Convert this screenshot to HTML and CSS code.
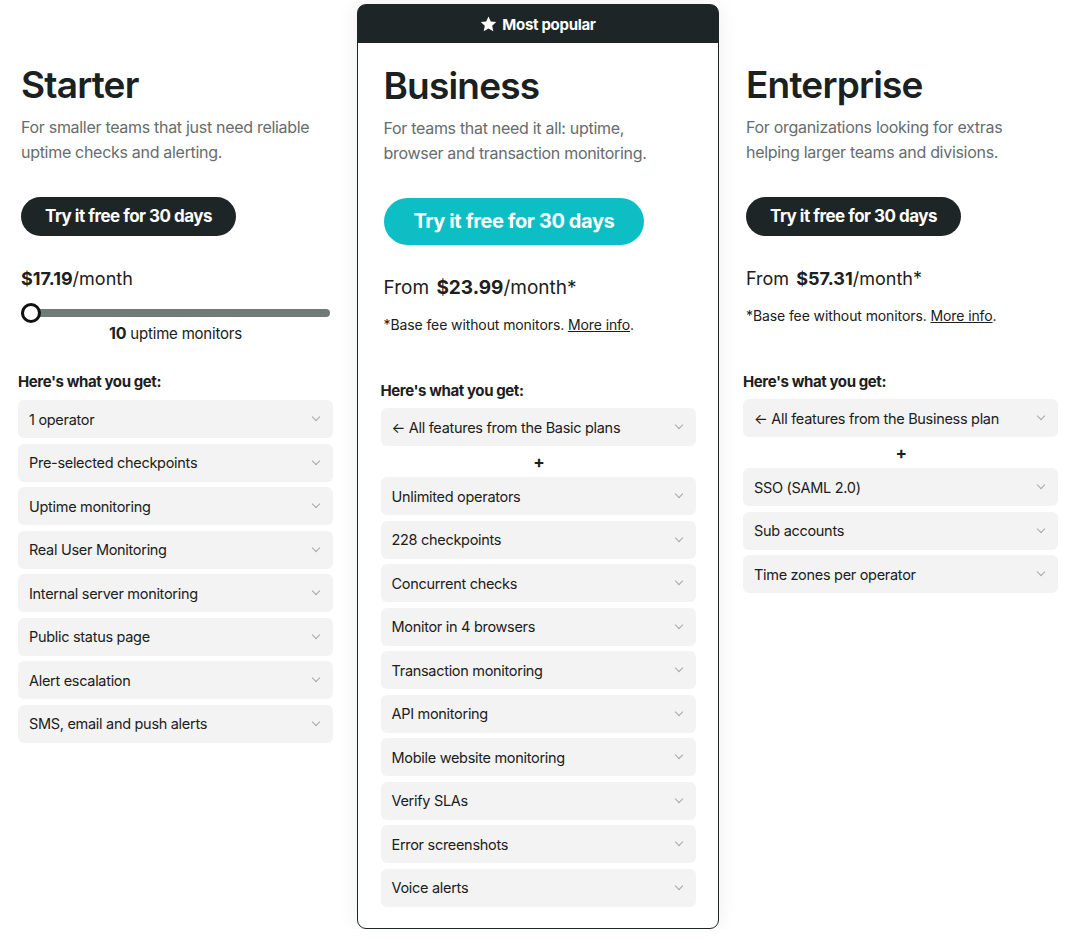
FILE: index.html
```html
<!DOCTYPE html>
<html lang="en">
  <head>
    <meta charset="UTF-8" />
    <meta name="viewport" content="width=device-width, initial-scale=1.0" />
    <title>Pricing plans</title>
    <link rel="stylesheet" href="styles.css">
  </head>
  <body>
    <div class="plans">
      <!-- Starter -->
      <div class="plan">
        <h2 class="plan-name">Starter</h2>
        <p class="plan-desc">For smaller teams that just need reliable uptime checks and alerting.</p>
        <a class="btn" href="#">Try it free for 30 days</a>
        <div class="price"><b>$17.19</b>/month</div>
        <div class="slider">
          <div class="track"></div>
          <div class="thumb"></div>
        </div>
        <div class="slider-label"><b>10</b> uptime monitors</div>
        <h4 class="get">Here's what you get:</h4>
        <ul class="features">
          <li>1 operator</li>
          <li>Pre-selected checkpoints</li>
          <li>Uptime monitoring</li>
          <li>Real User Monitoring</li>
          <li>Internal server monitoring</li>
          <li>Public status page</li>
          <li>Alert escalation</li>
          <li>SMS, email and push alerts</li>
        </ul>
      </div>

      <!-- Business -->
      <div class="plan popular">
        <div class="badge">
          <svg width="17" height="16" viewBox="0 0 24 23"><path d="M12 0.8l3.3 7.1 7.8 0.9-5.8 5.3 1.6 7.7L12 17.9l-6.9 3.9 1.6-7.7L0.9 8.8l7.8-0.9z" fill="#fff"/></svg>
          Most popular
        </div>
        <h2 class="plan-name">Business</h2>
        <p class="plan-desc">For teams that need it all: uptime, browser and transaction monitoring.</p>
        <a class="btn btn-teal" href="#">Try it free for 30 days</a>
        <div class="price">From <b>$23.99</b>/month*</div>
        <p class="note">*Base fee without monitors. <a href="#">More info</a>.</p>
        <h4 class="get">Here's what you get:</h4>
        <ul class="features">
          <li>&larr; All features from the Basic plans</li>
          <li class="plus">+</li>
          <li>Unlimited operators</li>
          <li>228 checkpoints</li>
          <li>Concurrent checks</li>
          <li>Monitor in 4 browsers</li>
          <li>Transaction monitoring</li>
          <li>API monitoring</li>
          <li>Mobile website monitoring</li>
          <li>Verify SLAs</li>
          <li>Error screenshots</li>
          <li>Voice alerts</li>
        </ul>
      </div>

      <!-- Enterprise -->
      <div class="plan">
        <h2 class="plan-name">Enterprise</h2>
        <p class="plan-desc">For organizations looking for extras helping larger teams and divisions.</p>
        <a class="btn" href="#">Try it free for 30 days</a>
        <div class="price">From <b>$57.31</b>/month*</div>
        <p class="note">*Base fee without monitors. <a href="#">More info</a>.</p>
        <h4 class="get">Here's what you get:</h4>
        <ul class="features">
          <li>&larr; All features from the Business plan</li>
          <li class="plus">+</li>
          <li>SSO (SAML 2.0)</li>
          <li>Sub accounts</li>
          <li>Time zones per operator</li>
        </ul>
      </div>
    </div>
  </body>
</html>
```

FILE: styles.css
```css
body {
  font-family: Inter, "Noto Sans", Arial, sans-serif;
  margin: 0;
  padding: 0;
  background-color: #fff;
  color: #1b2020;
}
.plans {
  display: grid;
  grid-template-columns: 315px 362px 315px;
  gap: 24px;
  padding: 0 0 0 18px;
  align-items: start;
}
.plan {
  display: flex;
  flex-direction: column;
  padding-top: 62px;
}
.plan.popular {
  margin-top: 4px;
  padding: 0 22px 21px 22.5px;
  border: 1.5px solid #1e2526;
  border-radius: 9px;
  box-shadow: 0 0 22px rgba(0, 0, 0, 0.07);
  background: #fff;
}
.badge {
  display: flex;
  align-items: center;
  justify-content: center;
  gap: 5px;
  height: 38px;
  margin: 0 -22px 20px -22.5px;
  background-color: #1e2526;
  border-radius: 6px 6px 0 0;
  color: #fff;
  font-weight: 700;
  font-size: 15px;
  letter-spacing: -0.3px;
}
.plan-name {
  margin: 0 0 0 3px;
  font-size: 37px;
  line-height: 46px;
  font-weight: 600;
  letter-spacing: -0.8px;
}
.plan-desc {
  margin: 7px 0 0 3px;
  font-size: 16px;
  line-height: 25px;
  letter-spacing: -0.3px;
  color: #676c6d;
  max-width: 305px;
}
.popular .plan-desc {
  max-width: 275px;
}
.btn {
  align-self: flex-start;
  margin: 32px 0 0 3px;
  padding: 0 24px;
  height: 39px;
  line-height: 39px;
  border-radius: 20px;
  background-color: #1e2526;
  color: #fff;
  font-size: 17px;
  font-weight: 700;
  letter-spacing: -0.5px;
  text-decoration: none;
}
.btn-teal {
  height: 47px;
  line-height: 47px;
  border-radius: 24px;
  padding: 0 30px;
  background-color: #0dbec4;
  font-size: 20px;
  letter-spacing: -0.4px;
}
.price {
  margin: 30px 0 0 3px;
  font-size: 18px;
  line-height: 26px;
}
.popular .price {
  font-size: 19px;
}
.price b {
  font-weight: 700;
  margin-left: 2px;
}
.plan:first-child .price b {
  margin-left: 0;
}
.note {
  margin: 14px 0 0 3px;
  font-size: 14px;
  line-height: 20px;
  letter-spacing: -0.1px;
}
.note a {
  color: inherit;
}
.note + .get {
  margin-top: 45px;
}
.note ~ .features {
  margin-top: 6px;
}
.slider {
  position: relative;
  height: 20px;
  margin: 11px 3px 0 3px;
  display: flex;
  align-items: center;
}
.track {
  width: 100%;
  height: 8px;
  border-radius: 4px;
  background-color: #707b77;
}
.thumb {
  position: absolute;
  left: 0;
  top: 0;
  width: 14px;
  height: 14px;
  border: 3px solid #111;
  border-radius: 50%;
  background: #fff;
}
.slider-label {
  text-align: center;
  font-size: 15px;
  line-height: 20px;
  letter-spacing: -0.2px;
}
.slider-label b {
  font-size: 16px;
}
.get {
  margin: 27px 0 0 0;
  font-size: 15px;
  line-height: 22px;
  font-weight: 700;
  letter-spacing: -0.4px;
}
.features {
  list-style: none;
  margin: 7px 0 0 0;
  padding: 0;
  display: flex;
  flex-direction: column;
  gap: 5.5px;
}
.features li {
  display: flex;
  align-items: center;
  justify-content: space-between;
  height: 38px;
  padding: 0 10px 0 11px;
  border-radius: 6px;
  background-color: #f3f3f3;
  font-size: 14.5px;
  letter-spacing: -0.3px;
}
.features li::after {
  content: "";
  width: 5px;
  height: 5px;
  margin-right: 4px;
  margin-top: -4px;
  border-right: 1.3px solid #a7a7a7;
  border-bottom: 1.3px solid #a7a7a7;
  transform: rotate(45deg);
}
.features li.plus {
  height: 20px;
  justify-content: center;
  background: none;
  font-weight: 700;
  font-size: 17px;
}
.features li.plus::after {
  display: none;
}
```
